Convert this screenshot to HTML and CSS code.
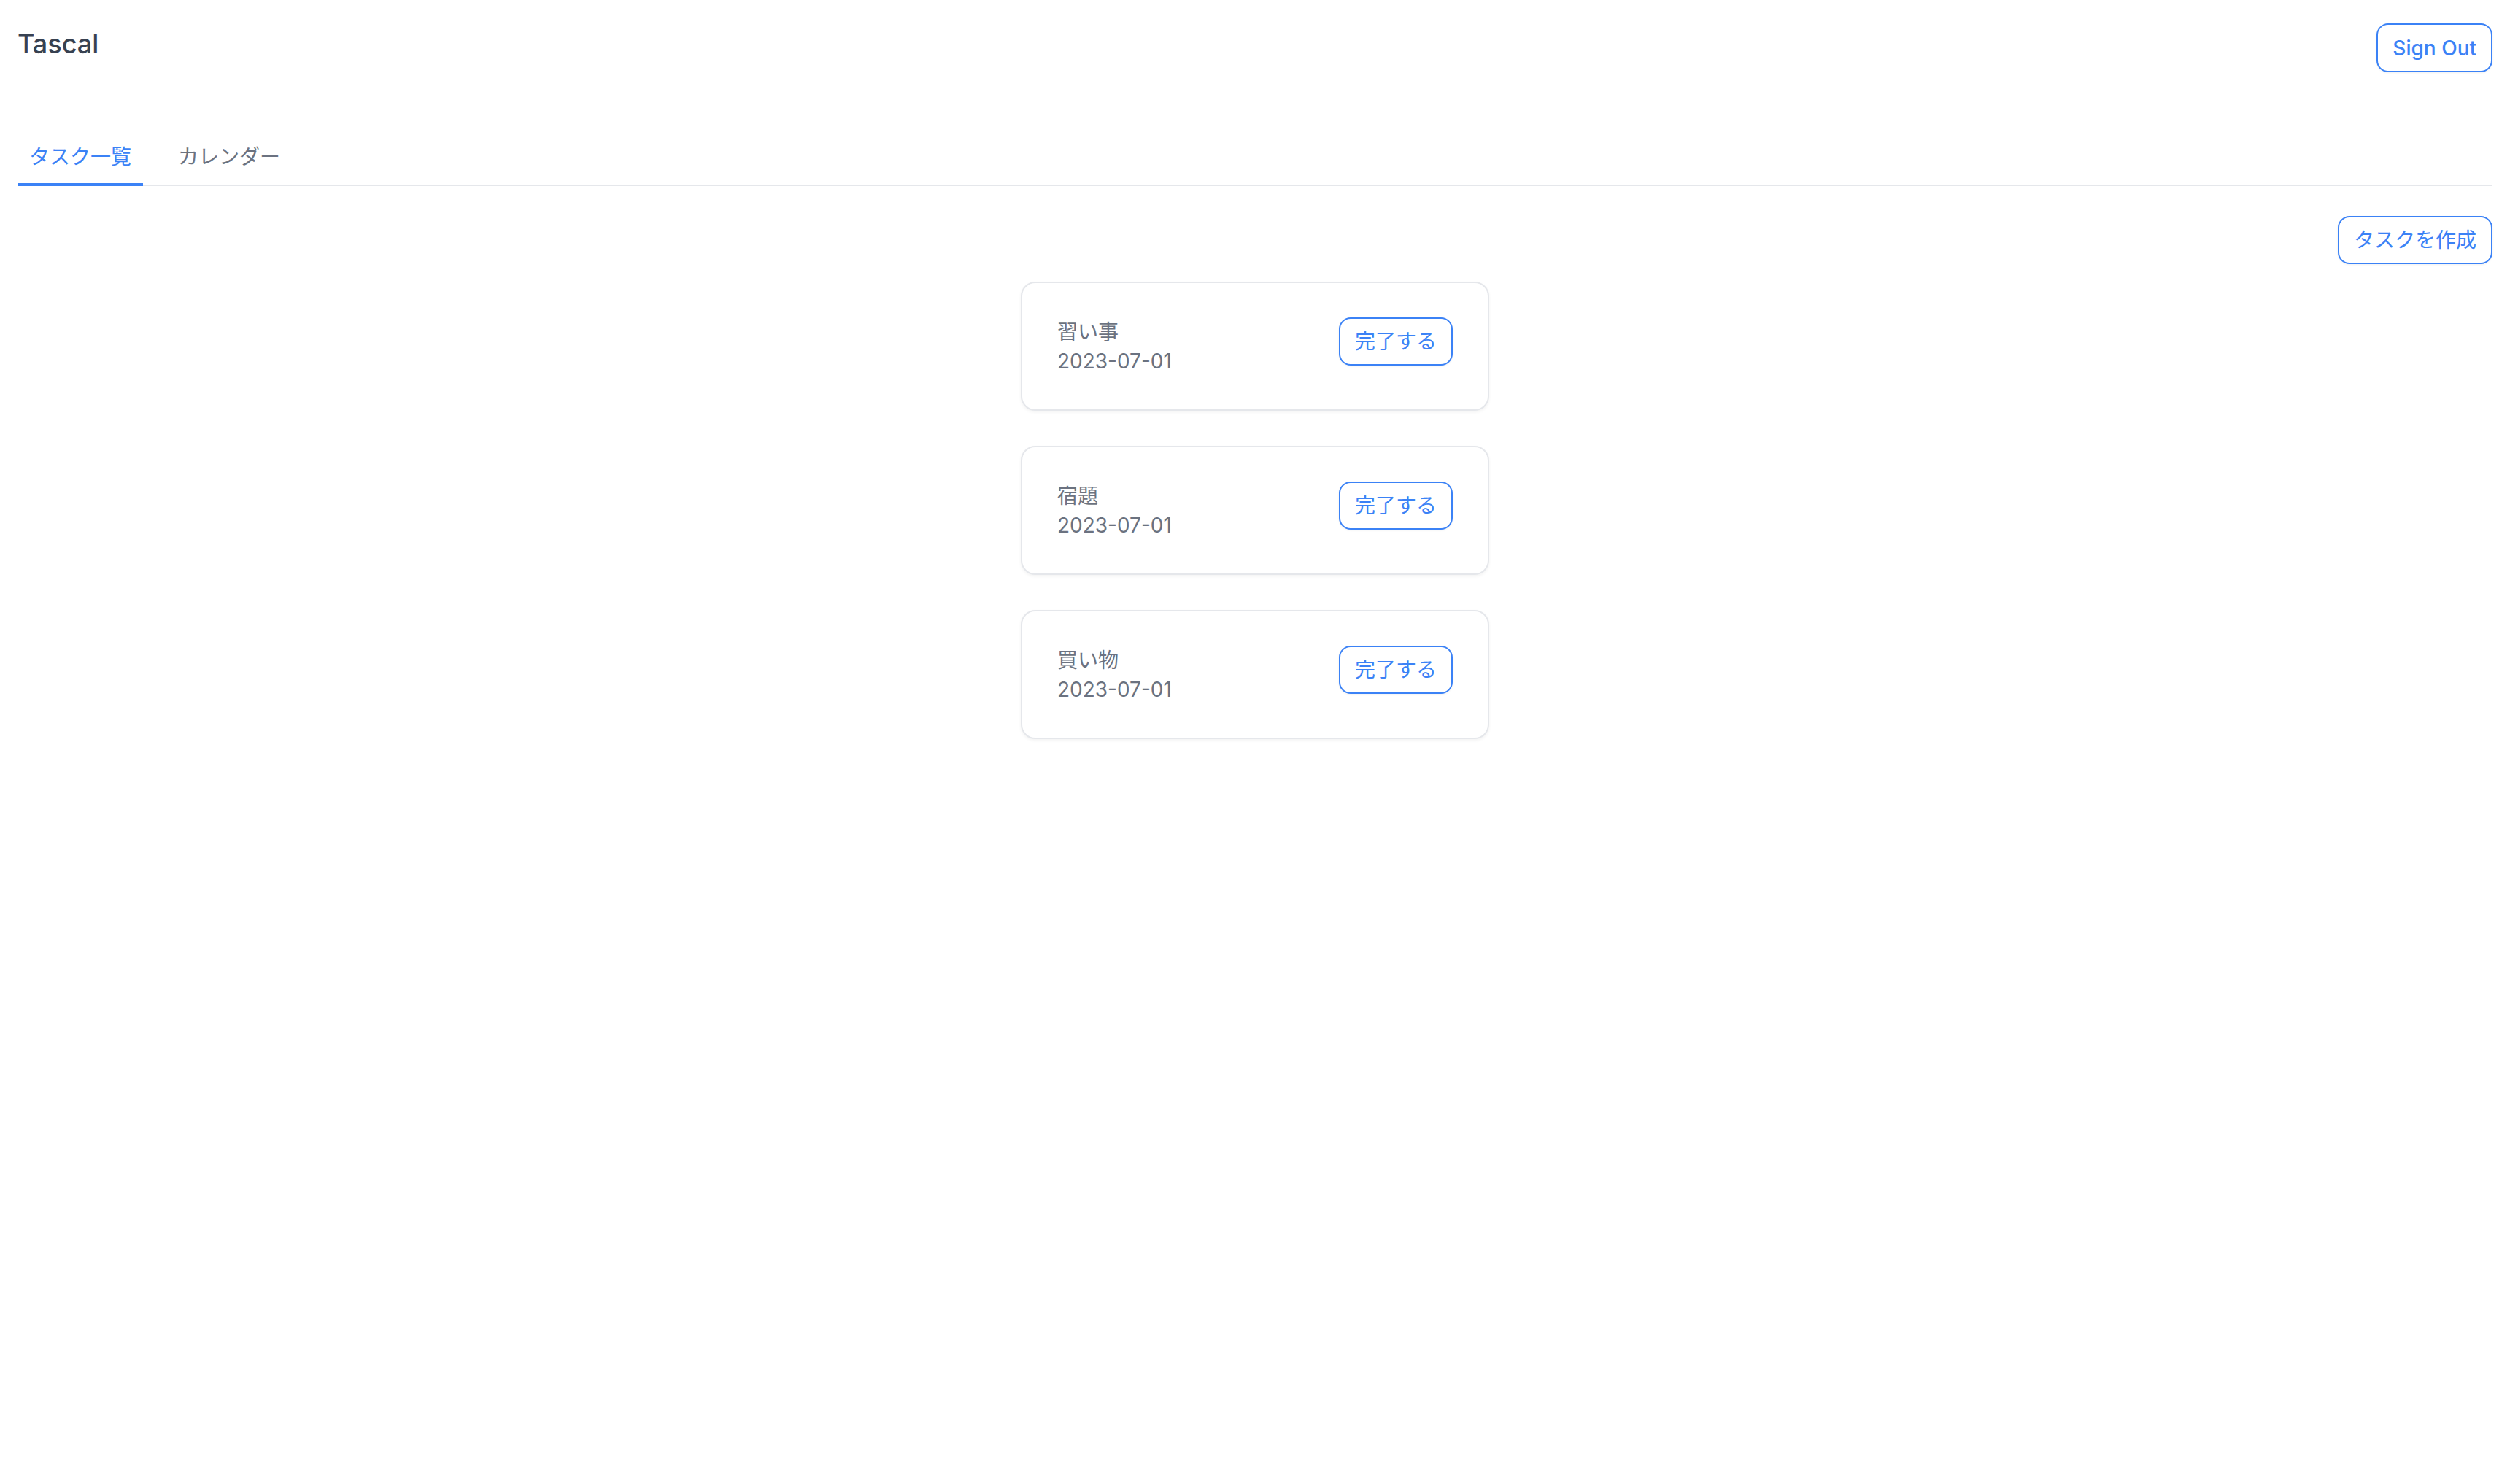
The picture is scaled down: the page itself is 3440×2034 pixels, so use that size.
FILE: index.html
```html
<!DOCTYPE html>
<html lang="ja">
<head>
<meta charset="utf-8">
<title>Tascal</title>
<link rel="stylesheet" href="styles.css">
</head>
<body>
<div class="page">
  <header class="header">
    <h1 class="brand">Tascal</h1>
    <button class="btn btn-signout">Sign Out</button>
  </header>
  <nav class="tabs">
    <div class="tab tab-active">タスク一覧</div>
    <div class="tab">カレンダー</div>
  </nav>
  <div class="toolbar">
    <button class="btn">タスクを作成</button>
  </div>
  <main class="list">
    <div class="card">
      <div class="card-text">
        <div>習い事</div>
        <div>2023-07-01</div>
      </div>
      <button class="btn">完了する</button>
    </div>
    <div class="card">
      <div class="card-text">
        <div>宿題</div>
        <div>2023-07-01</div>
      </div>
      <button class="btn">完了する</button>
    </div>
    <div class="card">
      <div class="card-text">
        <div>買い物</div>
        <div>2023-07-01</div>
      </div>
      <button class="btn">完了する</button>
    </div>
  </main>
</div>
</body>
</html>
```

FILE: styles.css
```css
* { box-sizing: border-box; }
html, body { margin: 0; padding: 0; background: #ffffff; }
body {
  font-family: Inter, "Noto Sans CJK JP", sans-serif;
  font-size: 28px;
  line-height: 40px;
  color: #6b7280;
}
.page {
  padding: 32px 24px;
}
.header {
  display: flex;
  justify-content: space-between;
  align-items: flex-start;
}
.brand {
  margin: 0;
  font-size: 36px;
  line-height: 56px;
  font-weight: 550;
  color: #374151;
}
.btn {
  font-family: Inter, "Noto Sans CJK JP", sans-serif;
  font-size: 28px;
  line-height: 40px;
  height: 66px;
  padding: 11px 20px;
  border: 2px solid #3b82f6;
  border-radius: 16px;
  background: #ffffff;
  color: #3b82f6;
  box-shadow: 0 1px 3px rgba(0, 0, 0, 0.06);
  cursor: pointer;
}
.btn-signout {
  font-weight: 500;
  height: 67px;
}
.tabs {
  display: flex;
  gap: 32px;
  margin-top: 78px;
  border-bottom: 2px solid #e5e7eb;
}
.tab {
  padding: 18px 16px 16px;
  margin-bottom: -2px;
  border-bottom: 4px solid transparent;
  color: #6b7280;
}
.tab-active {
  color: #3b82f6;
  border-bottom-color: #3b82f6;
}
.toolbar {
  display: flex;
  justify-content: flex-end;
  margin-top: 41px;
}
.list {
  display: flex;
  flex-direction: column;
  align-items: center;
  gap: 48px;
  margin-top: 24px;
}
.card {
  width: 642px;
  height: 177px;
  display: flex;
  justify-content: space-between;
  align-items: flex-start;
  padding: 47px 48px 46px;
  border: 2px solid #e5e7eb;
  border-radius: 20px;
  background: #ffffff;
  box-shadow: 0 2px 4px rgba(0, 0, 0, 0.05);
}
.card-text {
  color: #6b7280;
}
```
